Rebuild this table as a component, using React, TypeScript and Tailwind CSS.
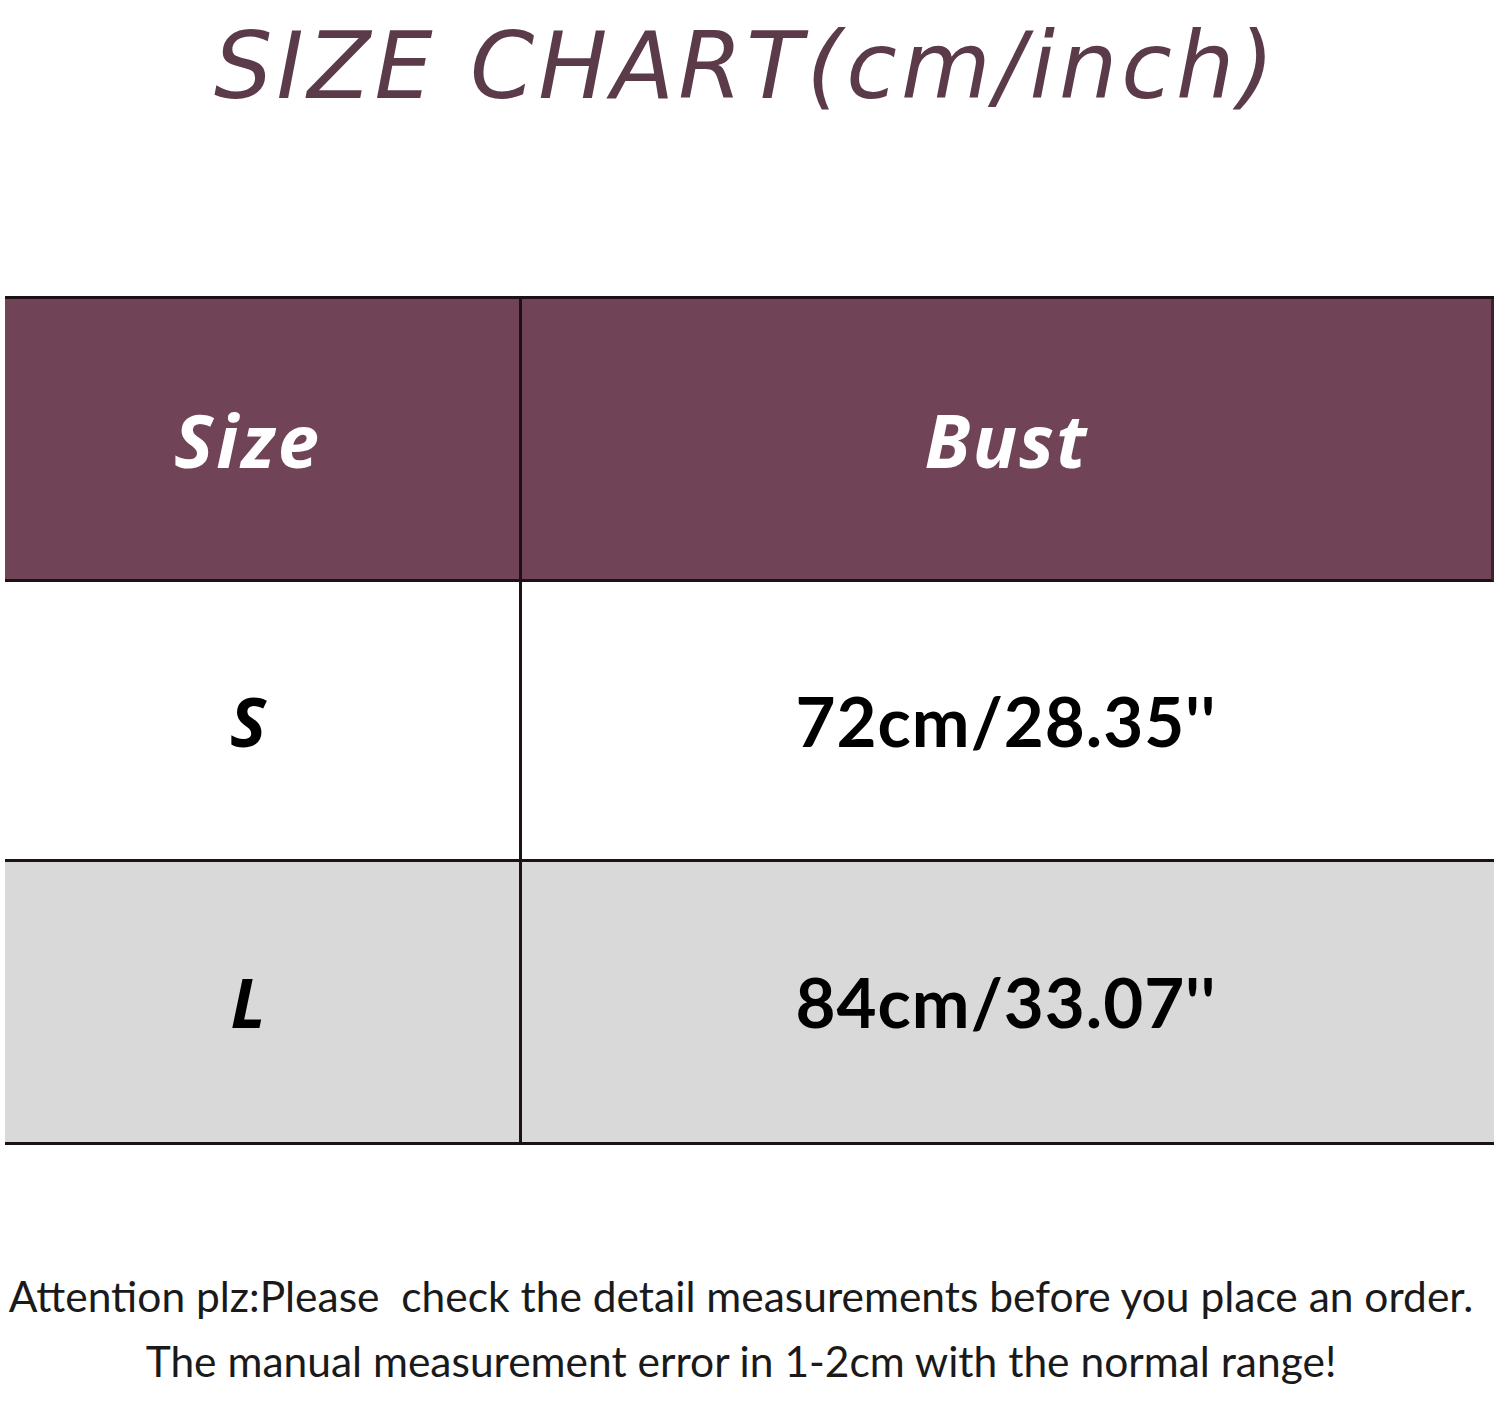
import React from "react";

const rows = [
  { size: "S", bust: "72cm/28.35''", bg: "bg-white" },
  { size: "L", bust: "84cm/33.07''", bg: "bg-[#d9d9d9]" },
];

export default function App() {
  return (
    <main className="w-[1498px] h-[1409px] bg-white overflow-hidden">
      {/* Titulo */}
      <div className="h-[296px] pt-[12px] pl-[214px]">
        <h1
          className="text-[92px] leading-[110px] text-[#5b3a4a] tracking-[4px] italic"
          style={{ fontFamily: '"DejaVu Sans", sans-serif' }}
        >
          SIZE CHART(cm/inch)
        </h1>
      </div>

      {/* Tabla */}
      <div className="ml-[5px] w-[1489px] border-t-[3px] border-b-[3px] border-[#1c1116]">
        <div className="grid grid-cols-[517px_1fr] h-[283px] bg-[#704356] border-b-[3px] border-[#1c1116] border-r-[3px] border-r-[#3a2430]">
          <div className="flex items-center justify-center border-r-[3px] border-[#1c1116] pr-[28px]">
            <span
              className="text-white font-bold italic text-[74px] tracking-[3px]"
              style={{ fontFamily: '"Open Sans", sans-serif' }}
            >
              Size
            </span>
          </div>
          <div className="flex items-center justify-center">
            <span
              className="text-white font-bold italic text-[74px] tracking-[2px]"
              style={{ fontFamily: '"Open Sans", sans-serif' }}
            >
              Bust
            </span>
          </div>
        </div>

        {rows.map((r, i) => (
          <div
            key={i}
            className={`grid grid-cols-[517px_1fr] h-[280px] ${r.bg} ${i === 0 ? "border-b-[3px] border-[#1c1116]" : ""}`}
          >
            <div className="flex items-center justify-center border-r-[3px] border-[#1c1116] pr-[28px]">
              <span
                className="text-black font-bold italic text-[68px]"
                style={{ fontFamily: '"Open Sans", sans-serif' }}
              >
                {r.size}
              </span>
            </div>
            <div className="flex items-center justify-center pr-[4px]">
              <span
                className="text-black font-bold text-[69px] tracking-[1px]"
                style={{ fontFamily: "Lato, sans-serif" }}
              >
                {r.bust}
              </span>
            </div>
          </div>
        ))}
      </div>

      {/* Nota */}
      <div
        className="mt-[118px] text-[#1a1a1a] text-[42.5px] leading-[65px] text-center pr-[16px]"
        style={{ fontFamily: "Lato, sans-serif" }}
      >
        <p>Attention plz:Please&nbsp; check the detail measurements before you place an order.</p>
        <p>The manual measurement error in 1-2cm with the normal range!</p>
      </div>
    </main>
  );
}
